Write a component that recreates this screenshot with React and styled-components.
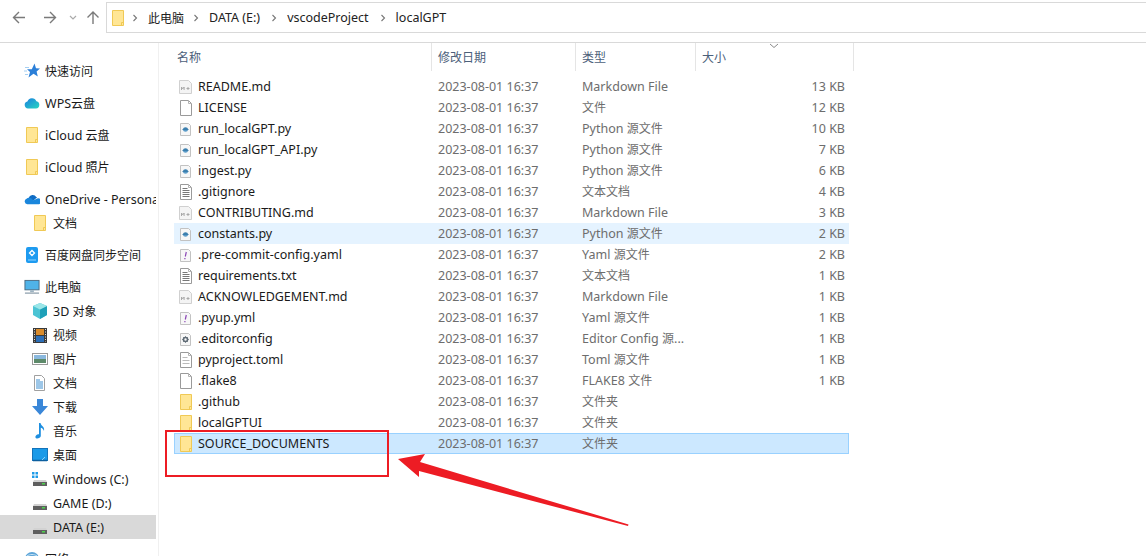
import React from "react";
import styled, { createGlobalStyle } from "styled-components";

const GlobalStyle = createGlobalStyle`
  html, body {
    margin: 0;
    padding: 0;
    background: #fff;
    overflow: hidden;
  }
  body {
    font-family: "Noto Sans", "Noto Sans CJK SC", sans-serif;
    font-size: 12px;
    color: #1a1a1a;
  }
`;

const files = [
  ["README.md", "md", "Markdown File", "13 KB"],
  ["LICENSE", "blank", "文件", "12 KB"],
  ["run_localGPT.py", "py", "Python 源文件", "10 KB"],
  ["run_localGPT_API.py", "py", "Python 源文件", "7 KB"],
  ["ingest.py", "py", "Python 源文件", "6 KB"],
  [".gitignore", "text", "文本文档", "4 KB"],
  ["CONTRIBUTING.md", "md", "Markdown File", "3 KB"],
  ["constants.py", "py", "Python 源文件", "2 KB", "hover"],
  [".pre-commit-config.yaml", "yaml", "Yaml 源文件", "2 KB"],
  ["requirements.txt", "text", "文本文档", "1 KB"],
  ["ACKNOWLEDGEMENT.md", "md", "Markdown File", "1 KB"],
  [".pyup.yml", "yaml", "Yaml 源文件", "1 KB"],
  [".editorconfig", "gear", "Editor Config 源...", "1 KB"],
  ["pyproject.toml", "toml", "Toml 源文件", "1 KB"],
  [".flake8", "blank", "FLAKE8 文件", "1 KB"],
  [".github", "folder", "文件夹", ""],
  ["localGPTUI", "folder", "文件夹", ""],
  ["SOURCE_DOCUMENTS", "folder", "文件夹", "", "selected"],
];

const navGroups = [
  [["快速访问", "star", 0]],
  [["WPS云盘", "wps", 0]],
  [["iCloud 云盘", "folder", 0]],
  [["iCloud 照片", "folder", 0]],
  [["OneDrive - Personal", "onedrive", 0], ["文档", "folder", 1]],
  [["百度网盘同步空间", "baidu", 0]],
  [
    ["此电脑", "monitor", 0],
    ["3D 对象", "cube", 1],
    ["视频", "film", 1],
    ["图片", "picture", 1],
    ["文档", "doc", 1],
    ["下载", "download", 1],
    ["音乐", "music", 1],
    ["桌面", "desktop", 1],
    ["Windows (C:)", "winDrive", 1],
    ["GAME (D:)", "drive", 1],
    ["DATA (E:)", "drive", 1, true],
  ],
  [["网络", "network", 0]],
];

// latin runs are set a bit larger than the cjk ones, like the original UI font
const Latin = styled.span`
  font-size: 12.5px;
`;

function Label({ text }) {
  return text.split(/([\u4e00-\u9fff]+)/).map((part, i) =>
    i % 2 ? part : part && <Latin key={i}>{part}</Latin>
  );
}

function FolderIcon() {
  return (
    <svg width="16" height="18" viewBox="0 0 16 18">
      <path d="M2.500 1.500h11v15h-11z" fill="#ffe695" stroke="#f0c955" />
      <path d="M11.500 16.500v-3h2" fill="none" stroke="#f0c955" />
    </svg>
  );
}

function PageIcon({ children, fill = "#fff" }) {
  return (
    <svg width="16" height="18" viewBox="0 0 16 18">
      <path d="M2.500 1.500h8l3 3v12h-11z" fill={fill} stroke="#9a9a9a" />
      <path d="M10.500 1.500v3h3" fill="none" stroke="#b4b4b4" />
      {children}
    </svg>
  );
}

function SmallPage({ children }) {
  return (
    <svg width="16" height="18" viewBox="0 0 16 18">
      <path d="M2.500 3.500h8l2 2v10h-10z" fill="#f7f7f7" stroke="#c2c2c2" />
      {children}
    </svg>
  );
}

function FileIcon({ kind }) {
  if (kind === "folder") return <FolderIcon />;
  if (kind === "blank") return <PageIcon />;
  if (kind === "md")
    return (
      <svg width="16" height="18" viewBox="0 0 16 18">
        <path d="M1.500 2.500h9l3 3v10h-12z" fill="#f4f4f4" stroke="#d0d0d0" />
        <path d="M3.500 12V9l1.300 1.800L6.100 9v3M8.500 10.500h3M10 9v3" fill="none" stroke="#a8a8a8" />
      </svg>
    );
  if (kind === "py")
    return (
      <SmallPage>
        <path d="M5 9.500c0-3 5-3 5 0z" fill="#3b7fae" />
        <path d="M10 9.500c0 3-5 3-5 0z" fill="#5b9bc8" />
        <path d="M4.500 9.500h6" stroke="#3b7fae" />
      </SmallPage>
    );
  if (kind === "text")
    return (
      <PageIcon>
        <path d="M4.500 5.500h5M4.500 7.500h7M4.500 9.500h7M4.500 11.500h7M4.500 13.500h7" stroke="#777" />
      </PageIcon>
    );
  if (kind === "toml")
    return (
      <PageIcon>
        <path d="M4.500 6.500h5M4.500 9.500h7M4.500 12.500h7" stroke="#bbb" />
      </PageIcon>
    );
  if (kind === "yaml")
    return (
      <SmallPage>
        <path d="M8.300 6l-1 4.500M6.900 12v1.200" stroke="#8a45b5" strokeWidth="1.200" />
      </SmallPage>
    );
  return (
    <SmallPage>
      <circle cx="7.500" cy="9.500" r="2" fill="none" stroke="#5f6b75" strokeWidth="1.600" />
      <path d="M7.500 6.300v1M7.500 11.700v1M4.300 9.500h1M9.700 9.500h1M5.300 7.300l.7.7M9 11l.7.7M9.700 7.300L9 8M6 11l-.7.7" stroke="#5f6b75" />
    </SmallPage>
  );
}

function NavIcon({ kind }) {
  switch (kind) {
    case "folder":
      return <FolderIcon />;
    case "star":
      return (
        <svg width="16" height="16" viewBox="0 0 16 16">
          <path d="M10.500 .5l1.500 4.800 4 .2-3.400 3 1.200 5-4.300-2.800L4.500 14.500l1.500-5.500L3 6.200h4.800z" fill="#2b7fd8" />
          <path d="M1 4.500h4M0 8h3M1 11.500h3" stroke="#a5cff2" />
        </svg>
      );
    case "wps":
      return (
        <svg width="16" height="16" viewBox="0 0 16 16">
          <defs>
            <linearGradient id="wpsCloud" x1="0" y1="0" x2="1" y2="1">
              <stop offset="0" stopColor="#1c7fe0" />
              <stop offset="1" stopColor="#25d6c0" />
            </linearGradient>
          </defs>
          <path d="M4 13.500a3.500 3.500 0 0 1-.6-6.900 4.800 4.800 0 0 1 9-.4 3.700 3.700 0 0 1-.4 7.300z" fill="url(#wpsCloud)" />
        </svg>
      );
    case "onedrive":
      return (
        <svg width="17" height="16" viewBox="0 0 17 16">
          <path d="M5 7a4.300 4.300 0 0 1 8-1 3 3 0 0 1 1 .2L8.500 11z" fill="#0f6cc4" />
          <path d="M3.500 13.500a3 3 0 0 1-.8-5.800A3.500 3.500 0 0 1 6 6.800 4 4 0 0 1 9 8.600l1 .6 4-1.800a3.200 3.200 0 0 1 2 6.100z" fill="#1a86dc" />
        </svg>
      );
    case "baidu":
      return (
        <svg width="16" height="18" viewBox="0 0 16 18">
          <rect x="2" y="1" width="12" height="16" rx="2" fill="#1e9bf0" />
          <path d="M8 4.500l2.500 2.500L8 9.500 5.500 7z" fill="none" stroke="#fff" strokeWidth="1.300" />
          <path d="M4 14h8" stroke="#8fd4ff" />
        </svg>
      );
    case "monitor":
      return (
        <svg width="17" height="16" viewBox="0 0 17 16">
          <rect x="1" y="1" width="15" height="10" fill="#4fb3e8" stroke="#4a6a80" />
          <path d="M6.500 11.500h4v2h-4z" fill="#9db3c2" />
          <path d="M1 14.500h15" stroke="#9aa9b5" strokeWidth="1.500" />
        </svg>
      );
    case "cube":
      return (
        <svg width="16" height="16" viewBox="0 0 16 16">
          <path d="M8 0l7 3v9l-7 4-7-4V3z" fill="#4cc4d4" />
          <path d="M8 6.500V16l7-4V3z" fill="#1ea0b8" />
          <path d="M8 0l7 3-7 3.500L1 3z" fill="#9be6e8" />
        </svg>
      );
    case "film":
      return (
        <svg width="16" height="16" viewBox="0 0 16 16">
          <rect x="1" y="1" width="14" height="15" fill="#3a3a3a" />
          <rect x="4" y="2" width="8" height="6" fill="#d98b2b" />
          <rect x="4" y="9" width="8" height="6" fill="#2c6fb8" />
          <path d="M2.500 2v13M13.500 2v13" stroke="#ddd" strokeDasharray="1 1.500" />
        </svg>
      );
    case "picture":
      return (
        <svg width="16" height="16" viewBox="0 0 16 16">
          <rect x="0.500" y="2.500" width="15" height="11" fill="#fff" stroke="#9a9a9a" />
          <rect x="2" y="4" width="12" height="4" fill="#8ab8de" />
          <rect x="2" y="8" width="12" height="4" fill="#5d8a6a" />
        </svg>
      );
    case "doc":
      return (
        <svg width="16" height="16" viewBox="0 0 16 16">
          <path d="M2.500 0.500h7l3 3v12h-10z" fill="#fff" stroke="#a0a0a0" />
          <path d="M4 5h4M4 7h7M4 9h7M4 11h7M4 13h7" stroke="#3d8fd1" />
        </svg>
      );
    case "download":
      return (
        <svg width="16" height="16" viewBox="0 0 16 16">
          <path d="M5 0h6v7h5l-8 9-8-9h5z" fill="#3a87d8" />
        </svg>
      );
    case "music":
      return (
        <svg width="16" height="17" viewBox="0 0 16 17">
          <path d="M7 0h1.500c.5 3 4.500 3.500 3.500 8-.6-2-2-3-3.200-3.300V13c0 2.200-4.800 3.600-5.300 1.500C3 12.500 5.500 11 7 11.300z" fill="#1e8fe0" />
        </svg>
      );
    case "desktop":
      return (
        <svg width="16" height="16" viewBox="0 0 16 16">
          <rect x="0.500" y="1.500" width="15" height="12" fill="#1a9ae8" stroke="#1373ba" />
          <path d="M1 13.500h14" stroke="#0d5f9e" strokeWidth="1.500" />
          <path d="M10 13l3-3" stroke="#8ed0f5" />
        </svg>
      );
    case "winDrive":
    case "drive":
      return (
        <svg width="16" height="16" viewBox="0 0 16 16">
          {kind === "winDrive" && (
            <path d="M0 1h2.500v2.500H0zM3.500 1H6v2.500H3.500zM0 4.500h2.500V7H0zM3.500 4.500H6V7H3.500z" fill="#1e9be8" />
          )}
          <path d="M2 9h12l1 2H1z" fill="#d2d2d2" />
          <rect x="1" y="11" width="14" height="4" fill="#5f5f5f" />
          <rect x="10" y="12" width="3" height="1.500" fill="#4cd24c" />
        </svg>
      );
    default:
      return (
        <svg width="16" height="16" viewBox="0 0 16 16">
          <circle cx="8" cy="8" r="7" fill="#5da5d8" />
          <path d="M3 5c3-2 7-2 10 0" stroke="#c8e3f5" fill="none" />
        </svg>
      );
  }
}

const Page = styled.div`
  position: relative;
  width: 1146px;
  height: 556px;
  overflow: hidden;
  background: #fff;
`;

const Toolbar = styled.div`
  display: flex;
  align-items: flex-start;
  height: 43px;
  box-sizing: border-box;
  border-bottom: 1px solid #d9d9d9;
  padding-top: 2px;
`;

const NavButtons = styled.div`
  display: flex;
  align-items: center;
  width: 106px;
  height: 30px;
  flex-shrink: 0;
  padding-left: 12px;
  box-sizing: border-box;
  color: #7a7a7a;
`;

const ArrowButton = styled.span`
  display: flex;
  margin-right: ${(p) => p.$gap}px;
`;

const AddressBar = styled.div`
  flex: 1;
  display: flex;
  align-items: center;
  height: 31px;
  box-sizing: border-box;
  border: 1px solid #d9d9d9;
  border-right: none;
  padding-left: 3px;
  color: #222;
`;

const Crumb = styled.span`
  margin-left: 9px;
  margin-right: ${(p) => (p.$first ? 8 : 10)}px;
  white-space: nowrap;
`;

const CrumbSeparator = styled.span`
  display: flex;
  color: #777;
  margin-left: ${(p) => (p.$first ? 5 : 0)}px;
`;

const Main = styled.div`
  display: flex;
  height: 513px;
`;

const Sidebar = styled.nav`
  width: 159px;
  flex-shrink: 0;
  box-sizing: border-box;
  border-right: 1px solid #f0f0f0;
  padding-top: 16px;
  padding-right: 2px;
  overflow: hidden;
`;

const NavGroup = styled.div`
  margin-bottom: 8px;
`;

const NavRow = styled.div`
  display: flex;
  align-items: center;
  height: 24px;
  padding-left: ${(p) => (p.$level ? 32 : 24)}px;
  background: ${(p) => (p.$active ? "#d9d9d9" : "transparent")};
  white-space: nowrap;
  overflow: hidden;
`;

const NavIconBox = styled.span`
  display: flex;
  justify-content: center;
  width: 16px;
  margin-right: 5px;
  flex-shrink: 0;
`;

const NavText = styled.span`
  white-space: pre;
`;

const Content = styled.section`
  flex: 1;
  padding-left: 15px;
`;

const HeaderRow = styled.div`
  display: grid;
  grid-template-columns: 258px 144px 120px 158px;
  height: 28px;
  color: #4c607a;
`;

const HeaderCell = styled.div`
  display: flex;
  align-items: center;
  box-sizing: border-box;
  height: 28px;
  padding-left: ${(p) => p.$pad}px;
  padding-bottom: 1px;
  border-right: 1px solid #e5e5e5;
`;

const SortMark = styled.span`
  position: absolute;
  left: 769px;
  top: 43px;
  display: flex;
  color: #8a8a8a;
`;

const FileList = styled.div`
  padding-top: 5px;
`;

const FileRow = styled.div`
  display: grid;
  grid-template-columns: 264px 144px 120px 147px;
  align-items: center;
  width: 675px;
  height: 21px;
  box-sizing: border-box;
  line-height: 19px;
  background: ${(p) =>
    p.$state === "selected" ? "#cce8ff" : p.$state === "hover" ? "#e5f3ff" : "transparent"};
  box-shadow: ${(p) => (p.$state === "selected" ? "inset 0 0 0 1px #99d1ff" : "none")};
`;

const NameCell = styled.div`
  display: flex;
  align-items: center;
  padding-left: 4px;
  white-space: nowrap;
`;

const FileIconBox = styled.span`
  display: flex;
  width: 16px;
  margin-right: 4px;
`;

const MetaCell = styled.div`
  color: #6d6d6d;
  white-space: nowrap;
`;

const SizeCell = styled(MetaCell)`
  text-align: right;
  padding-right: 4px;
`;

const RedBox = styled.div`
  position: absolute;
  left: 165px;
  top: 430px;
  width: 224px;
  height: 47px;
  box-sizing: border-box;
  border: 2px solid #ed1c24;
`;

const ArrowOverlay = styled.svg`
  position: absolute;
  left: 390px;
  top: 450px;
`;

const Chevron = () => (
  <svg width="8" height="8" viewBox="0 0 8 8">
    <path d="M2.500 1l3 3-3 3" fill="none" stroke="currentColor" strokeWidth="1.100" />
  </svg>
);

export default function App() {
  return (
    <Page>
      <GlobalStyle />
      <Toolbar>
        <NavButtons>
          <ArrowButton $gap={17}>
            <svg width="14" height="30" viewBox="0 0 14 30">
              <path d="M13 15.500H2M7 10l-5.500 5.500L7 21" fill="none" stroke="currentColor" strokeWidth="1.400" />
            </svg>
          </ArrowButton>
          <ArrowButton $gap={12}>
            <svg width="14" height="30" viewBox="0 0 14 30">
              <path d="M1 15.500h11M7 10l5.500 5.500L7 21" fill="none" stroke="currentColor" strokeWidth="1.400" />
            </svg>
          </ArrowButton>
          <ArrowButton $gap={9}>
            <svg width="8" height="30" viewBox="0 0 8 30">
              <path d="M1 14l3 3 3-3" fill="none" stroke="#aaa" strokeWidth="1.200" />
            </svg>
          </ArrowButton>
          <ArrowButton $gap={0}>
            <svg width="14" height="30" viewBox="0 0 14 30">
              <path d="M7 22V10M1.500 15.500L7 10l5.500 5.500" fill="none" stroke="currentColor" strokeWidth="1.400" />
            </svg>
          </ArrowButton>
        </NavButtons>
        <AddressBar>
          <FolderIcon />
          {["此电脑", "DATA (E:)", "vscodeProject", "localGPT"].map((crumb, i) => (
            <React.Fragment key={crumb}>
              <CrumbSeparator $first={i === 0}>
                <Chevron />
              </CrumbSeparator>
              <Crumb $first={i === 0}>
                <Label text={crumb} />
              </Crumb>
            </React.Fragment>
          ))}
        </AddressBar>
      </Toolbar>
      <Main>
        <Sidebar>
          {navGroups.map((group, i) => (
            <NavGroup key={i}>
              {group.map(([label, icon, level, active]) => (
                <NavRow key={label + icon} $level={level} $active={active}>
                  <NavIconBox>
                    <NavIcon kind={icon} />
                  </NavIconBox>
                  <NavText>
                    <Label text={label} />
                  </NavText>
                </NavRow>
              ))}
            </NavGroup>
          ))}
        </Sidebar>
        <Content>
          <HeaderRow>
            <HeaderCell $pad={3}>名称</HeaderCell>
            <HeaderCell $pad={6}>修改日期</HeaderCell>
            <HeaderCell $pad={6}>类型</HeaderCell>
            <HeaderCell $pad={6}>大小</HeaderCell>
          </HeaderRow>
          <FileList>
            {files.map(([name, kind, type, size, state]) => (
              <FileRow key={name} $state={state}>
                <NameCell>
                  <FileIconBox>
                    <FileIcon kind={kind} />
                  </FileIconBox>
                  <Latin>{name}</Latin>
                </NameCell>
                <MetaCell>
                  <Latin>2023-08-01 16:37</Latin>
                </MetaCell>
                <MetaCell>
                  <Label text={type} />
                </MetaCell>
                <SizeCell>
                  <Latin>{size}</Latin>
                </SizeCell>
              </FileRow>
            ))}
          </FileList>
        </Content>
      </Main>
      <SortMark>
        <svg width="10" height="6" viewBox="0 0 10 6">
          <path d="M1 1l4 3.500L9 1" fill="none" stroke="currentColor" />
        </svg>
      </SortMark>
      <RedBox />
      <ArrowOverlay width="245" height="80" viewBox="390 450 245 80">
        <path d="M398 459L425 454 420 462 628.500 524.500 628 526 419 471 419 477z" fill="#ed1c24" />
      </ArrowOverlay>
    </Page>
  );
}
